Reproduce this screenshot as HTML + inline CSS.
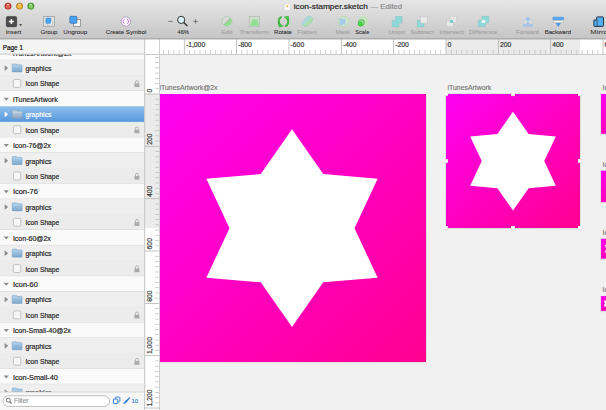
<!DOCTYPE html><html><head><meta charset="utf-8"><style>html,body{margin:0;padding:0;width:606px;height:410px;overflow:hidden;background:#f1f1f1}svg{display:block}text{font-family:"Liberation Sans",sans-serif}</style></head><body>
<svg width="606" height="410" viewBox="0 0 606 410">
<defs>
<linearGradient id="tb" x1="0" y1="0" x2="0" y2="1"><stop offset="0" stop-color="#e6e6e6"/><stop offset="1" stop-color="#c6c6c6"/></linearGradient>
<linearGradient id="mag" x1="0" y1="0" x2="1" y2="1"><stop offset="0" stop-color="#ff00f2"/><stop offset="1" stop-color="#ff0090"/></linearGradient>
<linearGradient id="sel" x1="0" y1="0" x2="0" y2="1"><stop offset="0" stop-color="#8ec0ec"/><stop offset="1" stop-color="#5898de"/></linearGradient>
<radialGradient id="red" cx="0.5" cy="0.35" r="0.6"><stop offset="0" stop-color="#ff9a8a"/><stop offset="1" stop-color="#d9342a"/></radialGradient>
<radialGradient id="yel" cx="0.5" cy="0.35" r="0.6"><stop offset="0" stop-color="#ffe08a"/><stop offset="1" stop-color="#e09a1a"/></radialGradient>
<radialGradient id="grn" cx="0.5" cy="0.35" r="0.6"><stop offset="0" stop-color="#b8f09a"/><stop offset="1" stop-color="#4aa838"/></radialGradient>
<linearGradient id="fold" x1="0" y1="0" x2="0" y2="1"><stop offset="0" stop-color="#b0d0ea"/><stop offset="1" stop-color="#7ca8cc"/></linearGradient>
<linearGradient id="foldsel" x1="0" y1="0" x2="0" y2="1"><stop offset="0" stop-color="#c9d6e2"/><stop offset="1" stop-color="#8aa6c0"/></linearGradient>
</defs>
<rect x="0" y="0" width="606" height="410" fill="#f1f1f1"/>
<rect x="157.80" y="94.30" width="268.70" height="268.50" fill="none" stroke="rgba(0,0,0,0.07)" stroke-width="1"/>
<rect x="158.00" y="94.00" width="268.00" height="268.00" fill="url(#mag)"/>
<polygon points="292.00,129.31 323.25,174.07 377.64,178.75 354.50,228.20 377.64,277.65 323.25,282.33 292.00,327.09 260.75,282.33 206.36,277.65 229.50,228.20 206.36,178.75 260.75,174.07" fill="#fff"/>
<text x="159.50" y="89.80" font-size="6.9" fill="#7a7a7a" stroke="#7a7a7a" stroke-width="0.18">iTunesArtwork@2x</text>
<rect x="445.80" y="94.30" width="134.70" height="134.50" fill="none" stroke="rgba(0,0,0,0.07)" stroke-width="1"/>
<rect x="446.00" y="94.00" width="134.00" height="134.00" fill="url(#mag)"/>
<polygon points="513.00,111.65 528.62,134.04 555.82,136.38 544.25,161.10 555.82,185.82 528.62,188.16 513.00,210.55 497.38,188.16 470.18,185.82 481.75,161.10 470.18,136.38 497.38,134.04" fill="#fff"/>
<text x="447.50" y="89.80" font-size="6.9" fill="#7a7a7a" stroke="#7a7a7a" stroke-width="0.18">iTunesArtwork</text>
<rect x="600.80" y="94.30" width="40.50" height="40.30" fill="none" stroke="rgba(0,0,0,0.07)" stroke-width="1"/>
<rect x="601.00" y="94.00" width="39.80" height="39.80" fill="url(#mag)"/>
<polygon points="620.90,99.24 625.54,105.89 633.62,106.59 630.18,113.93 633.62,121.27 625.54,121.97 620.90,128.62 616.26,121.97 608.18,121.27 611.62,113.93 608.18,106.59 616.26,105.89" fill="#fff"/>
<text x="602.50" y="89.80" font-size="6.9" fill="#7a7a7a" stroke="#7a7a7a" stroke-width="0.18">Icon-76@2x</text>
<rect x="600.80" y="171.00" width="32.10" height="31.90" fill="none" stroke="rgba(0,0,0,0.07)" stroke-width="1"/>
<rect x="601.00" y="170.70" width="31.40" height="31.40" fill="url(#mag)"/>
<polygon points="616.70,174.84 620.36,180.08 626.73,180.63 624.02,186.42 626.73,192.22 620.36,192.77 616.70,198.01 613.04,192.77 606.67,192.22 609.38,186.42 606.67,180.63 613.04,180.08" fill="#fff"/>
<text x="602.50" y="166.50" font-size="6.9" fill="#7a7a7a" stroke="#7a7a7a" stroke-width="0.18">Icon-60@2x</text>
<rect x="600.80" y="239.10" width="20.60" height="20.40" fill="none" stroke="rgba(0,0,0,0.07)" stroke-width="1"/>
<rect x="601.00" y="238.80" width="19.90" height="19.90" fill="url(#mag)"/>
<polygon points="610.95,241.42 613.27,244.75 617.31,245.09 615.59,248.76 617.31,252.44 613.27,252.78 610.95,256.11 608.63,252.78 604.59,252.44 606.31,248.76 604.59,245.09 608.63,244.75" fill="#fff"/>
<text x="602.50" y="234.60" font-size="6.9" fill="#7a7a7a" stroke="#7a7a7a" stroke-width="0.18">Icon-76</text>
<rect x="600.80" y="296.40" width="15.50" height="15.30" fill="none" stroke="rgba(0,0,0,0.07)" stroke-width="1"/>
<rect x="601.00" y="296.10" width="14.80" height="14.80" fill="url(#mag)"/>
<polygon points="608.40,298.05 610.13,300.52 613.13,300.78 611.85,303.51 613.13,306.24 610.13,306.50 608.40,308.97 606.67,306.50 603.67,306.24 604.95,303.51 603.67,300.78 606.67,300.52" fill="#fff"/>
<text x="602.50" y="291.90" font-size="6.9" fill="#7a7a7a" stroke="#7a7a7a" stroke-width="0.18">Icon-60</text>
<rect x="445.6" y="93.6" width="134.8" height="134.8" fill="none" stroke="#cfe6d8" stroke-width="0.7"/>
<rect x="444.10" y="92.30" width="3.8" height="3.8" fill="#c4c4c4"/><rect x="444.10" y="92.10" width="3.6" height="3.4" fill="#fbfbfb"/>
<rect x="444.10" y="159.30" width="3.8" height="3.8" fill="#c4c4c4"/><rect x="444.10" y="159.10" width="3.6" height="3.4" fill="#fbfbfb"/>
<rect x="444.10" y="226.30" width="3.8" height="3.8" fill="#c4c4c4"/><rect x="444.10" y="226.10" width="3.6" height="3.4" fill="#fbfbfb"/>
<rect x="511.10" y="92.30" width="3.8" height="3.8" fill="#c4c4c4"/><rect x="511.10" y="92.10" width="3.6" height="3.4" fill="#fbfbfb"/>
<rect x="511.10" y="226.30" width="3.8" height="3.8" fill="#c4c4c4"/><rect x="511.10" y="226.10" width="3.6" height="3.4" fill="#fbfbfb"/>
<rect x="578.10" y="92.30" width="3.8" height="3.8" fill="#c4c4c4"/><rect x="578.10" y="92.10" width="3.6" height="3.4" fill="#fbfbfb"/>
<rect x="578.10" y="159.30" width="3.8" height="3.8" fill="#c4c4c4"/><rect x="578.10" y="159.10" width="3.6" height="3.4" fill="#fbfbfb"/>
<rect x="578.10" y="226.30" width="3.8" height="3.8" fill="#c4c4c4"/><rect x="578.10" y="226.10" width="3.6" height="3.4" fill="#fbfbfb"/>
<rect x="145" y="39" width="461" height="15.5" fill="#ffffff"/>
<rect x="446" y="39" width="134" height="15.5" fill="#ebebeb"/>
<rect x="145" y="54" width="461" height="1" fill="#c8c8c8"/>
<rect x="145" y="39" width="14.5" height="371" fill="#ffffff"/>
<rect x="145" y="94" width="14.5" height="134" fill="#ebebeb"/>
<rect x="159" y="55" width="1" height="355" fill="#d0d0d0"/>
<rect x="145" y="39" width="15" height="15" fill="#ffffff"/>
<rect x="145" y="54" width="15" height="1" fill="#c8c8c8"/><rect x="159" y="39" width="1" height="16" fill="#d0d0d0"/>
<rect x="163.01" y="50" width="0.7" height="4" fill="#bdbdbd"/><rect x="168.25" y="50" width="0.7" height="4" fill="#bdbdbd"/><rect x="173.48" y="50" width="0.7" height="4" fill="#bdbdbd"/><rect x="178.72" y="50" width="0.7" height="4" fill="#bdbdbd"/><rect x="183.90" y="39" width="0.8" height="15.5" fill="#b4b4b4"/><text x="185.90" y="47" font-size="6.8" fill="#333" stroke="#333" stroke-width="0.18">-1,000</text><rect x="189.18" y="50" width="0.7" height="4" fill="#bdbdbd"/><rect x="194.42" y="50" width="0.7" height="4" fill="#bdbdbd"/><rect x="199.65" y="50" width="0.7" height="4" fill="#bdbdbd"/><rect x="204.89" y="50" width="0.7" height="4" fill="#bdbdbd"/><rect x="210.12" y="50" width="0.7" height="4" fill="#bdbdbd"/><rect x="215.35" y="50" width="0.7" height="4" fill="#bdbdbd"/><rect x="220.59" y="50" width="0.7" height="4" fill="#bdbdbd"/><rect x="225.82" y="50" width="0.7" height="4" fill="#bdbdbd"/><rect x="231.06" y="50" width="0.7" height="4" fill="#bdbdbd"/><rect x="236.24" y="39" width="0.8" height="15.5" fill="#b4b4b4"/><text x="238.24" y="47" font-size="6.8" fill="#333" stroke="#333" stroke-width="0.18">-800</text><rect x="241.52" y="50" width="0.7" height="4" fill="#bdbdbd"/><rect x="246.76" y="50" width="0.7" height="4" fill="#bdbdbd"/><rect x="251.99" y="50" width="0.7" height="4" fill="#bdbdbd"/><rect x="257.23" y="50" width="0.7" height="4" fill="#bdbdbd"/><rect x="262.46" y="50" width="0.7" height="4" fill="#bdbdbd"/><rect x="267.69" y="50" width="0.7" height="4" fill="#bdbdbd"/><rect x="272.93" y="50" width="0.7" height="4" fill="#bdbdbd"/><rect x="278.16" y="50" width="0.7" height="4" fill="#bdbdbd"/><rect x="283.40" y="50" width="0.7" height="4" fill="#bdbdbd"/><rect x="288.58" y="39" width="0.8" height="15.5" fill="#b4b4b4"/><text x="290.58" y="47" font-size="6.8" fill="#333" stroke="#333" stroke-width="0.18">-600</text><rect x="293.86" y="50" width="0.7" height="4" fill="#bdbdbd"/><rect x="299.10" y="50" width="0.7" height="4" fill="#bdbdbd"/><rect x="304.33" y="50" width="0.7" height="4" fill="#bdbdbd"/><rect x="309.57" y="50" width="0.7" height="4" fill="#bdbdbd"/><rect x="314.80" y="50" width="0.7" height="4" fill="#bdbdbd"/><rect x="320.03" y="50" width="0.7" height="4" fill="#bdbdbd"/><rect x="325.27" y="50" width="0.7" height="4" fill="#bdbdbd"/><rect x="330.50" y="50" width="0.7" height="4" fill="#bdbdbd"/><rect x="335.74" y="50" width="0.7" height="4" fill="#bdbdbd"/><rect x="340.92" y="39" width="0.8" height="15.5" fill="#b4b4b4"/><text x="342.92" y="47" font-size="6.8" fill="#333" stroke="#333" stroke-width="0.18">-400</text><rect x="346.20" y="50" width="0.7" height="4" fill="#bdbdbd"/><rect x="351.44" y="50" width="0.7" height="4" fill="#bdbdbd"/><rect x="356.67" y="50" width="0.7" height="4" fill="#bdbdbd"/><rect x="361.91" y="50" width="0.7" height="4" fill="#bdbdbd"/><rect x="367.14" y="50" width="0.7" height="4" fill="#bdbdbd"/><rect x="372.37" y="50" width="0.7" height="4" fill="#bdbdbd"/><rect x="377.61" y="50" width="0.7" height="4" fill="#bdbdbd"/><rect x="382.84" y="50" width="0.7" height="4" fill="#bdbdbd"/><rect x="388.08" y="50" width="0.7" height="4" fill="#bdbdbd"/><rect x="393.26" y="39" width="0.8" height="15.5" fill="#b4b4b4"/><text x="395.26" y="47" font-size="6.8" fill="#333" stroke="#333" stroke-width="0.18">-200</text><rect x="398.54" y="50" width="0.7" height="4" fill="#bdbdbd"/><rect x="403.78" y="50" width="0.7" height="4" fill="#bdbdbd"/><rect x="409.01" y="50" width="0.7" height="4" fill="#bdbdbd"/><rect x="414.25" y="50" width="0.7" height="4" fill="#bdbdbd"/><rect x="419.48" y="50" width="0.7" height="4" fill="#bdbdbd"/><rect x="424.71" y="50" width="0.7" height="4" fill="#bdbdbd"/><rect x="429.95" y="50" width="0.7" height="4" fill="#bdbdbd"/><rect x="435.18" y="50" width="0.7" height="4" fill="#bdbdbd"/><rect x="440.42" y="50" width="0.7" height="4" fill="#bdbdbd"/><rect x="445.60" y="39" width="0.8" height="15.5" fill="#b4b4b4"/><text x="447.60" y="47" font-size="6.8" fill="#333" stroke="#333" stroke-width="0.18">0</text><rect x="450.88" y="50" width="0.7" height="4" fill="#bdbdbd"/><rect x="456.12" y="50" width="0.7" height="4" fill="#bdbdbd"/><rect x="461.35" y="50" width="0.7" height="4" fill="#bdbdbd"/><rect x="466.59" y="50" width="0.7" height="4" fill="#bdbdbd"/><rect x="471.82" y="50" width="0.7" height="4" fill="#bdbdbd"/><rect x="477.05" y="50" width="0.7" height="4" fill="#bdbdbd"/><rect x="482.29" y="50" width="0.7" height="4" fill="#bdbdbd"/><rect x="487.52" y="50" width="0.7" height="4" fill="#bdbdbd"/><rect x="492.76" y="50" width="0.7" height="4" fill="#bdbdbd"/><rect x="497.94" y="39" width="0.8" height="15.5" fill="#b4b4b4"/><text x="499.94" y="47" font-size="6.8" fill="#333" stroke="#333" stroke-width="0.18">200</text><rect x="503.22" y="50" width="0.7" height="4" fill="#bdbdbd"/><rect x="508.46" y="50" width="0.7" height="4" fill="#bdbdbd"/><rect x="513.69" y="50" width="0.7" height="4" fill="#bdbdbd"/><rect x="518.93" y="50" width="0.7" height="4" fill="#bdbdbd"/><rect x="524.16" y="50" width="0.7" height="4" fill="#bdbdbd"/><rect x="529.39" y="50" width="0.7" height="4" fill="#bdbdbd"/><rect x="534.63" y="50" width="0.7" height="4" fill="#bdbdbd"/><rect x="539.86" y="50" width="0.7" height="4" fill="#bdbdbd"/><rect x="545.10" y="50" width="0.7" height="4" fill="#bdbdbd"/><rect x="550.28" y="39" width="0.8" height="15.5" fill="#b4b4b4"/><text x="552.28" y="47" font-size="6.8" fill="#333" stroke="#333" stroke-width="0.18">400</text><rect x="555.56" y="50" width="0.7" height="4" fill="#bdbdbd"/><rect x="560.80" y="50" width="0.7" height="4" fill="#bdbdbd"/><rect x="566.03" y="50" width="0.7" height="4" fill="#bdbdbd"/><rect x="571.27" y="50" width="0.7" height="4" fill="#bdbdbd"/><rect x="576.50" y="50" width="0.7" height="4" fill="#bdbdbd"/><rect x="581.73" y="50" width="0.7" height="4" fill="#bdbdbd"/><rect x="586.97" y="50" width="0.7" height="4" fill="#bdbdbd"/><rect x="592.20" y="50" width="0.7" height="4" fill="#bdbdbd"/><rect x="597.44" y="50" width="0.7" height="4" fill="#bdbdbd"/><rect x="602.62" y="39" width="0.8" height="15.5" fill="#b4b4b4"/><text x="604.62" y="47" font-size="6.8" fill="#333" stroke="#333" stroke-width="0.18">600</text><rect x="155" y="57.01" width="4" height="0.7" fill="#bdbdbd"/><rect x="155" y="62.25" width="4" height="0.7" fill="#bdbdbd"/><rect x="155" y="67.48" width="4" height="0.7" fill="#bdbdbd"/><rect x="155" y="72.71" width="4" height="0.7" fill="#bdbdbd"/><rect x="155" y="77.95" width="4" height="0.7" fill="#bdbdbd"/><rect x="155" y="83.18" width="4" height="0.7" fill="#bdbdbd"/><rect x="155" y="88.42" width="4" height="0.7" fill="#bdbdbd"/><rect x="145" y="93.60" width="14.5" height="0.8" fill="#b4b4b4"/><text transform="translate(152.3 92.40) rotate(-90)" font-size="6.8" fill="#333" stroke="#333" stroke-width="0.18">0</text><rect x="155" y="98.88" width="4" height="0.7" fill="#bdbdbd"/><rect x="155" y="104.12" width="4" height="0.7" fill="#bdbdbd"/><rect x="155" y="109.35" width="4" height="0.7" fill="#bdbdbd"/><rect x="155" y="114.59" width="4" height="0.7" fill="#bdbdbd"/><rect x="155" y="119.82" width="4" height="0.7" fill="#bdbdbd"/><rect x="155" y="125.05" width="4" height="0.7" fill="#bdbdbd"/><rect x="155" y="130.29" width="4" height="0.7" fill="#bdbdbd"/><rect x="155" y="135.52" width="4" height="0.7" fill="#bdbdbd"/><rect x="155" y="140.76" width="4" height="0.7" fill="#bdbdbd"/><rect x="145" y="145.94" width="14.5" height="0.8" fill="#b4b4b4"/><text transform="translate(152.3 144.74) rotate(-90)" font-size="6.8" fill="#333" stroke="#333" stroke-width="0.18">200</text><rect x="155" y="151.22" width="4" height="0.7" fill="#bdbdbd"/><rect x="155" y="156.46" width="4" height="0.7" fill="#bdbdbd"/><rect x="155" y="161.69" width="4" height="0.7" fill="#bdbdbd"/><rect x="155" y="166.93" width="4" height="0.7" fill="#bdbdbd"/><rect x="155" y="172.16" width="4" height="0.7" fill="#bdbdbd"/><rect x="155" y="177.39" width="4" height="0.7" fill="#bdbdbd"/><rect x="155" y="182.63" width="4" height="0.7" fill="#bdbdbd"/><rect x="155" y="187.86" width="4" height="0.7" fill="#bdbdbd"/><rect x="155" y="193.10" width="4" height="0.7" fill="#bdbdbd"/><rect x="145" y="198.28" width="14.5" height="0.8" fill="#b4b4b4"/><text transform="translate(152.3 197.08) rotate(-90)" font-size="6.8" fill="#333" stroke="#333" stroke-width="0.18">400</text><rect x="155" y="203.56" width="4" height="0.7" fill="#bdbdbd"/><rect x="155" y="208.80" width="4" height="0.7" fill="#bdbdbd"/><rect x="155" y="214.03" width="4" height="0.7" fill="#bdbdbd"/><rect x="155" y="219.27" width="4" height="0.7" fill="#bdbdbd"/><rect x="155" y="224.50" width="4" height="0.7" fill="#bdbdbd"/><rect x="155" y="229.73" width="4" height="0.7" fill="#bdbdbd"/><rect x="155" y="234.97" width="4" height="0.7" fill="#bdbdbd"/><rect x="155" y="240.20" width="4" height="0.7" fill="#bdbdbd"/><rect x="155" y="245.44" width="4" height="0.7" fill="#bdbdbd"/><rect x="145" y="250.62" width="14.5" height="0.8" fill="#b4b4b4"/><text transform="translate(152.3 249.42) rotate(-90)" font-size="6.8" fill="#333" stroke="#333" stroke-width="0.18">600</text><rect x="155" y="255.90" width="4" height="0.7" fill="#bdbdbd"/><rect x="155" y="261.14" width="4" height="0.7" fill="#bdbdbd"/><rect x="155" y="266.37" width="4" height="0.7" fill="#bdbdbd"/><rect x="155" y="271.61" width="4" height="0.7" fill="#bdbdbd"/><rect x="155" y="276.84" width="4" height="0.7" fill="#bdbdbd"/><rect x="155" y="282.07" width="4" height="0.7" fill="#bdbdbd"/><rect x="155" y="287.31" width="4" height="0.7" fill="#bdbdbd"/><rect x="155" y="292.54" width="4" height="0.7" fill="#bdbdbd"/><rect x="155" y="297.78" width="4" height="0.7" fill="#bdbdbd"/><rect x="145" y="302.96" width="14.5" height="0.8" fill="#b4b4b4"/><text transform="translate(152.3 301.76) rotate(-90)" font-size="6.8" fill="#333" stroke="#333" stroke-width="0.18">800</text><rect x="155" y="308.24" width="4" height="0.7" fill="#bdbdbd"/><rect x="155" y="313.48" width="4" height="0.7" fill="#bdbdbd"/><rect x="155" y="318.71" width="4" height="0.7" fill="#bdbdbd"/><rect x="155" y="323.95" width="4" height="0.7" fill="#bdbdbd"/><rect x="155" y="329.18" width="4" height="0.7" fill="#bdbdbd"/><rect x="155" y="334.41" width="4" height="0.7" fill="#bdbdbd"/><rect x="155" y="339.65" width="4" height="0.7" fill="#bdbdbd"/><rect x="155" y="344.88" width="4" height="0.7" fill="#bdbdbd"/><rect x="155" y="350.12" width="4" height="0.7" fill="#bdbdbd"/><rect x="145" y="355.30" width="14.5" height="0.8" fill="#b4b4b4"/><text transform="translate(152.3 354.10) rotate(-90)" font-size="6.8" fill="#333" stroke="#333" stroke-width="0.18">1,000</text><rect x="155" y="360.58" width="4" height="0.7" fill="#bdbdbd"/><rect x="155" y="365.82" width="4" height="0.7" fill="#bdbdbd"/><rect x="155" y="371.05" width="4" height="0.7" fill="#bdbdbd"/><rect x="155" y="376.29" width="4" height="0.7" fill="#bdbdbd"/><rect x="155" y="381.52" width="4" height="0.7" fill="#bdbdbd"/><rect x="155" y="386.75" width="4" height="0.7" fill="#bdbdbd"/><rect x="155" y="391.99" width="4" height="0.7" fill="#bdbdbd"/><rect x="155" y="397.22" width="4" height="0.7" fill="#bdbdbd"/><rect x="155" y="402.46" width="4" height="0.7" fill="#bdbdbd"/><rect x="145" y="407.64" width="14.5" height="0.8" fill="#b4b4b4"/><text transform="translate(152.3 406.44) rotate(-90)" font-size="6.8" fill="#333" stroke="#333" stroke-width="0.18">1,200</text>
<rect x="0" y="39" width="144" height="371" fill="#ebebeb"/>
<rect x="143.6" y="39" width="1.6" height="371" fill="#cccccc"/>
<rect x="0" y="44.77" width="144" height="15.43" fill="#fafafa"/>
<rect x="0" y="59.75" width="144" height="0.9" fill="#d4d4d4"/>
<polygon points="3.6,51.37 8.9,51.37 6.25,54.37" fill="#8c8c8c"/>
<text x="12.9" y="55.52" font-size="7.2" textLength="58.50" lengthAdjust="spacingAndGlyphs" fill="#1c1c1c" stroke="#1c1c1c" stroke-width="0.18">iTunesArtwork@2x</text>
<rect x="0" y="60.20" width="144" height="15.43" fill="#efefef"/>
<rect x="0" y="75.33" width="144" height="0.6" fill="#e6e6e6"/>
<polygon points="4.7,65.20 4.7,70.90 8.1,68.05" fill="#8a8a8a"/>
<path d="M13 63.95 h3.3 a0.6 0.6 0 0 1 0.5 0.3 l0.4 0.6 h4.3 a0.6 0.6 0 0 1 0.6 0.6 v6 a0.6 0.6 0 0 1 -0.6 0.6 h-8.7 a0.6 0.6 0 0 1 -0.6 -0.6 v-6.9 a0.6 0.6 0 0 1 0.6 -0.6z" fill="url(#fold)" stroke="#6f98bf" stroke-width="0.45"/>
<path d="M12.6 66.10 h9.4" stroke="#c2dcf0" stroke-width="0.4"/>
<text x="25.4" y="70.95" font-size="7.2" textLength="26.2" lengthAdjust="spacingAndGlyphs" fill="#1c1c1c" stroke="#1c1c1c" stroke-width="0.18">graphics</text>
<rect x="0" y="75.63" width="144" height="15.43" fill="#ececec"/>
<rect x="0" y="90.61" width="144" height="0.9" fill="#d4d4d4"/>
<rect x="13.4" y="79.48" width="7.4" height="7.9" rx="1.3" fill="#f6f6f6" stroke="#a8a8a8" stroke-width="0.65"/>
<text x="25.4" y="86.38" font-size="7.2" textLength="33.9" lengthAdjust="spacingAndGlyphs" fill="#1c1c1c" stroke="#1c1c1c" stroke-width="0.18">Icon Shape</text>
<path d="M134.4 83.43 h5 v3.6 h-5z" fill="#aaaaaa"/>
<path d="M135.5 83.63 v-1.6 a1.4 1.4 0 0 1 2.8 0 v1.6" fill="none" stroke="#aaaaaa" stroke-width="0.9"/>
<rect x="0" y="91.06" width="144" height="15.43" fill="#fafafa"/>
<rect x="0" y="106.04" width="144" height="0.9" fill="#d4d4d4"/>
<polygon points="3.6,97.66 8.9,97.66 6.25,100.66" fill="#8c8c8c"/>
<text x="12.9" y="101.81" font-size="7.2" textLength="44.80" lengthAdjust="spacingAndGlyphs" fill="#1c1c1c" stroke="#1c1c1c" stroke-width="0.18">iTunesArtwork</text>
<rect x="0" y="106.49" width="144" height="15.43" fill="url(#sel)"/>
<polygon points="4.7,111.49 4.7,117.19 8.1,114.34" fill="#ffffff"/>
<path d="M13 110.24 h3.3 a0.6 0.6 0 0 1 0.5 0.3 l0.4 0.6 h4.3 a0.6 0.6 0 0 1 0.6 0.6 v6 a0.6 0.6 0 0 1 -0.6 0.6 h-8.7 a0.6 0.6 0 0 1 -0.6 -0.6 v-6.9 a0.6 0.6 0 0 1 0.6 -0.6z" fill="url(#foldsel)" stroke="#8aa2b8" stroke-width="0.45"/>
<path d="M12.6 112.39 h9.4" stroke="#d8e2ea" stroke-width="0.4"/>
<text x="25.4" y="117.24" font-size="7.2" textLength="26.2" lengthAdjust="spacingAndGlyphs" fill="#ffffff" stroke="#ffffff" stroke-width="0.18">graphics</text>
<rect x="0" y="121.92" width="144" height="15.43" fill="#ececec"/>
<rect x="0" y="136.90" width="144" height="0.9" fill="#d4d4d4"/>
<rect x="13.4" y="125.77" width="7.4" height="7.9" rx="1.3" fill="#f6f6f6" stroke="#a8a8a8" stroke-width="0.65"/>
<text x="25.4" y="132.67" font-size="7.2" textLength="33.9" lengthAdjust="spacingAndGlyphs" fill="#1c1c1c" stroke="#1c1c1c" stroke-width="0.18">Icon Shape</text>
<path d="M134.4 129.72 h5 v3.6 h-5z" fill="#aaaaaa"/>
<path d="M135.5 129.92 v-1.6 a1.4 1.4 0 0 1 2.8 0 v1.6" fill="none" stroke="#aaaaaa" stroke-width="0.9"/>
<rect x="0" y="137.35" width="144" height="15.43" fill="#fafafa"/>
<rect x="0" y="152.33" width="144" height="0.9" fill="#d4d4d4"/>
<polygon points="3.6,143.95 8.9,143.95 6.25,146.95" fill="#8c8c8c"/>
<text x="12.9" y="148.10" font-size="7.2" textLength="38.00" lengthAdjust="spacingAndGlyphs" fill="#1c1c1c" stroke="#1c1c1c" stroke-width="0.18">Icon-76@2x</text>
<rect x="0" y="152.78" width="144" height="15.43" fill="#efefef"/>
<rect x="0" y="167.91" width="144" height="0.6" fill="#e6e6e6"/>
<polygon points="4.7,157.78 4.7,163.48 8.1,160.63" fill="#8a8a8a"/>
<path d="M13 156.53 h3.3 a0.6 0.6 0 0 1 0.5 0.3 l0.4 0.6 h4.3 a0.6 0.6 0 0 1 0.6 0.6 v6 a0.6 0.6 0 0 1 -0.6 0.6 h-8.7 a0.6 0.6 0 0 1 -0.6 -0.6 v-6.9 a0.6 0.6 0 0 1 0.6 -0.6z" fill="url(#fold)" stroke="#6f98bf" stroke-width="0.45"/>
<path d="M12.6 158.68 h9.4" stroke="#c2dcf0" stroke-width="0.4"/>
<text x="25.4" y="163.53" font-size="7.2" textLength="26.2" lengthAdjust="spacingAndGlyphs" fill="#1c1c1c" stroke="#1c1c1c" stroke-width="0.18">graphics</text>
<rect x="0" y="168.21" width="144" height="15.43" fill="#ececec"/>
<rect x="0" y="183.19" width="144" height="0.9" fill="#d4d4d4"/>
<rect x="13.4" y="172.06" width="7.4" height="7.9" rx="1.3" fill="#f6f6f6" stroke="#a8a8a8" stroke-width="0.65"/>
<text x="25.4" y="178.96" font-size="7.2" textLength="33.9" lengthAdjust="spacingAndGlyphs" fill="#1c1c1c" stroke="#1c1c1c" stroke-width="0.18">Icon Shape</text>
<path d="M134.4 176.01 h5 v3.6 h-5z" fill="#aaaaaa"/>
<path d="M135.5 176.21 v-1.6 a1.4 1.4 0 0 1 2.8 0 v1.6" fill="none" stroke="#aaaaaa" stroke-width="0.9"/>
<rect x="0" y="183.64" width="144" height="15.43" fill="#fafafa"/>
<rect x="0" y="198.62" width="144" height="0.9" fill="#d4d4d4"/>
<polygon points="3.6,190.24 8.9,190.24 6.25,193.24" fill="#8c8c8c"/>
<text x="12.9" y="194.39" font-size="7.2" textLength="24.90" lengthAdjust="spacingAndGlyphs" fill="#1c1c1c" stroke="#1c1c1c" stroke-width="0.18">Icon-76</text>
<rect x="0" y="199.07" width="144" height="15.43" fill="#efefef"/>
<rect x="0" y="214.20" width="144" height="0.6" fill="#e6e6e6"/>
<polygon points="4.7,204.07 4.7,209.77 8.1,206.92" fill="#8a8a8a"/>
<path d="M13 202.82 h3.3 a0.6 0.6 0 0 1 0.5 0.3 l0.4 0.6 h4.3 a0.6 0.6 0 0 1 0.6 0.6 v6 a0.6 0.6 0 0 1 -0.6 0.6 h-8.7 a0.6 0.6 0 0 1 -0.6 -0.6 v-6.9 a0.6 0.6 0 0 1 0.6 -0.6z" fill="url(#fold)" stroke="#6f98bf" stroke-width="0.45"/>
<path d="M12.6 204.97 h9.4" stroke="#c2dcf0" stroke-width="0.4"/>
<text x="25.4" y="209.82" font-size="7.2" textLength="26.2" lengthAdjust="spacingAndGlyphs" fill="#1c1c1c" stroke="#1c1c1c" stroke-width="0.18">graphics</text>
<rect x="0" y="214.50" width="144" height="15.43" fill="#ececec"/>
<rect x="0" y="229.48" width="144" height="0.9" fill="#d4d4d4"/>
<rect x="13.4" y="218.35" width="7.4" height="7.9" rx="1.3" fill="#f6f6f6" stroke="#a8a8a8" stroke-width="0.65"/>
<text x="25.4" y="225.25" font-size="7.2" textLength="33.9" lengthAdjust="spacingAndGlyphs" fill="#1c1c1c" stroke="#1c1c1c" stroke-width="0.18">Icon Shape</text>
<path d="M134.4 222.30 h5 v3.6 h-5z" fill="#aaaaaa"/>
<path d="M135.5 222.50 v-1.6 a1.4 1.4 0 0 1 2.8 0 v1.6" fill="none" stroke="#aaaaaa" stroke-width="0.9"/>
<rect x="0" y="229.93" width="144" height="15.43" fill="#fafafa"/>
<rect x="0" y="244.91" width="144" height="0.9" fill="#d4d4d4"/>
<polygon points="3.6,236.53 8.9,236.53 6.25,239.53" fill="#8c8c8c"/>
<text x="12.9" y="240.68" font-size="7.2" textLength="38.00" lengthAdjust="spacingAndGlyphs" fill="#1c1c1c" stroke="#1c1c1c" stroke-width="0.18">Icon-60@2x</text>
<rect x="0" y="245.36" width="144" height="15.43" fill="#efefef"/>
<rect x="0" y="260.49" width="144" height="0.6" fill="#e6e6e6"/>
<polygon points="4.7,250.36 4.7,256.06 8.1,253.21" fill="#8a8a8a"/>
<path d="M13 249.11 h3.3 a0.6 0.6 0 0 1 0.5 0.3 l0.4 0.6 h4.3 a0.6 0.6 0 0 1 0.6 0.6 v6 a0.6 0.6 0 0 1 -0.6 0.6 h-8.7 a0.6 0.6 0 0 1 -0.6 -0.6 v-6.9 a0.6 0.6 0 0 1 0.6 -0.6z" fill="url(#fold)" stroke="#6f98bf" stroke-width="0.45"/>
<path d="M12.6 251.26 h9.4" stroke="#c2dcf0" stroke-width="0.4"/>
<text x="25.4" y="256.11" font-size="7.2" textLength="26.2" lengthAdjust="spacingAndGlyphs" fill="#1c1c1c" stroke="#1c1c1c" stroke-width="0.18">graphics</text>
<rect x="0" y="260.79" width="144" height="15.43" fill="#ececec"/>
<rect x="0" y="275.77" width="144" height="0.9" fill="#d4d4d4"/>
<rect x="13.4" y="264.64" width="7.4" height="7.9" rx="1.3" fill="#f6f6f6" stroke="#a8a8a8" stroke-width="0.65"/>
<text x="25.4" y="271.54" font-size="7.2" textLength="33.9" lengthAdjust="spacingAndGlyphs" fill="#1c1c1c" stroke="#1c1c1c" stroke-width="0.18">Icon Shape</text>
<path d="M134.4 268.59 h5 v3.6 h-5z" fill="#aaaaaa"/>
<path d="M135.5 268.79 v-1.6 a1.4 1.4 0 0 1 2.8 0 v1.6" fill="none" stroke="#aaaaaa" stroke-width="0.9"/>
<rect x="0" y="276.22" width="144" height="15.43" fill="#fafafa"/>
<rect x="0" y="291.20" width="144" height="0.9" fill="#d4d4d4"/>
<polygon points="3.6,282.82 8.9,282.82 6.25,285.82" fill="#8c8c8c"/>
<text x="12.9" y="286.97" font-size="7.2" textLength="25.00" lengthAdjust="spacingAndGlyphs" fill="#1c1c1c" stroke="#1c1c1c" stroke-width="0.18">Icon-60</text>
<rect x="0" y="291.65" width="144" height="15.43" fill="#efefef"/>
<rect x="0" y="306.78" width="144" height="0.6" fill="#e6e6e6"/>
<polygon points="4.7,296.65 4.7,302.35 8.1,299.50" fill="#8a8a8a"/>
<path d="M13 295.40 h3.3 a0.6 0.6 0 0 1 0.5 0.3 l0.4 0.6 h4.3 a0.6 0.6 0 0 1 0.6 0.6 v6 a0.6 0.6 0 0 1 -0.6 0.6 h-8.7 a0.6 0.6 0 0 1 -0.6 -0.6 v-6.9 a0.6 0.6 0 0 1 0.6 -0.6z" fill="url(#fold)" stroke="#6f98bf" stroke-width="0.45"/>
<path d="M12.6 297.55 h9.4" stroke="#c2dcf0" stroke-width="0.4"/>
<text x="25.4" y="302.40" font-size="7.2" textLength="26.2" lengthAdjust="spacingAndGlyphs" fill="#1c1c1c" stroke="#1c1c1c" stroke-width="0.18">graphics</text>
<rect x="0" y="307.08" width="144" height="15.43" fill="#ececec"/>
<rect x="0" y="322.06" width="144" height="0.9" fill="#d4d4d4"/>
<rect x="13.4" y="310.93" width="7.4" height="7.9" rx="1.3" fill="#f6f6f6" stroke="#a8a8a8" stroke-width="0.65"/>
<text x="25.4" y="317.83" font-size="7.2" textLength="33.9" lengthAdjust="spacingAndGlyphs" fill="#1c1c1c" stroke="#1c1c1c" stroke-width="0.18">Icon Shape</text>
<path d="M134.4 314.88 h5 v3.6 h-5z" fill="#aaaaaa"/>
<path d="M135.5 315.08 v-1.6 a1.4 1.4 0 0 1 2.8 0 v1.6" fill="none" stroke="#aaaaaa" stroke-width="0.9"/>
<rect x="0" y="322.51" width="144" height="15.43" fill="#fafafa"/>
<rect x="0" y="337.49" width="144" height="0.9" fill="#d4d4d4"/>
<polygon points="3.6,329.11 8.9,329.11 6.25,332.11" fill="#8c8c8c"/>
<text x="12.9" y="333.26" font-size="7.2" textLength="58.00" lengthAdjust="spacingAndGlyphs" fill="#1c1c1c" stroke="#1c1c1c" stroke-width="0.18">Icon-Small-40@2x</text>
<rect x="0" y="337.94" width="144" height="15.43" fill="#efefef"/>
<rect x="0" y="353.07" width="144" height="0.6" fill="#e6e6e6"/>
<polygon points="4.7,342.94 4.7,348.64 8.1,345.79" fill="#8a8a8a"/>
<path d="M13 341.69 h3.3 a0.6 0.6 0 0 1 0.5 0.3 l0.4 0.6 h4.3 a0.6 0.6 0 0 1 0.6 0.6 v6 a0.6 0.6 0 0 1 -0.6 0.6 h-8.7 a0.6 0.6 0 0 1 -0.6 -0.6 v-6.9 a0.6 0.6 0 0 1 0.6 -0.6z" fill="url(#fold)" stroke="#6f98bf" stroke-width="0.45"/>
<path d="M12.6 343.84 h9.4" stroke="#c2dcf0" stroke-width="0.4"/>
<text x="25.4" y="348.69" font-size="7.2" textLength="26.2" lengthAdjust="spacingAndGlyphs" fill="#1c1c1c" stroke="#1c1c1c" stroke-width="0.18">graphics</text>
<rect x="0" y="353.37" width="144" height="15.43" fill="#ececec"/>
<rect x="0" y="368.35" width="144" height="0.9" fill="#d4d4d4"/>
<rect x="13.4" y="357.22" width="7.4" height="7.9" rx="1.3" fill="#f6f6f6" stroke="#a8a8a8" stroke-width="0.65"/>
<text x="25.4" y="364.12" font-size="7.2" textLength="33.9" lengthAdjust="spacingAndGlyphs" fill="#1c1c1c" stroke="#1c1c1c" stroke-width="0.18">Icon Shape</text>
<path d="M134.4 361.17 h5 v3.6 h-5z" fill="#aaaaaa"/>
<path d="M135.5 361.37 v-1.6 a1.4 1.4 0 0 1 2.8 0 v1.6" fill="none" stroke="#aaaaaa" stroke-width="0.9"/>
<rect x="0" y="368.80" width="144" height="15.43" fill="#fafafa"/>
<rect x="0" y="383.78" width="144" height="0.9" fill="#d4d4d4"/>
<polygon points="3.6,375.40 8.9,375.40 6.25,378.40" fill="#8c8c8c"/>
<text x="12.9" y="379.55" font-size="7.2" textLength="44.90" lengthAdjust="spacingAndGlyphs" fill="#1c1c1c" stroke="#1c1c1c" stroke-width="0.18">Icon-Small-40</text>
<rect x="0" y="384.23" width="144" height="15.43" fill="#efefef"/>
<rect x="0" y="399.21" width="144" height="0.9" fill="#d4d4d4"/>
<polygon points="4.7,389.23 4.7,394.93 8.1,392.08" fill="#8a8a8a"/>
<path d="M13 387.98 h3.3 a0.6 0.6 0 0 1 0.5 0.3 l0.4 0.6 h4.3 a0.6 0.6 0 0 1 0.6 0.6 v6 a0.6 0.6 0 0 1 -0.6 0.6 h-8.7 a0.6 0.6 0 0 1 -0.6 -0.6 v-6.9 a0.6 0.6 0 0 1 0.6 -0.6z" fill="url(#fold)" stroke="#6f98bf" stroke-width="0.45"/>
<path d="M12.6 390.13 h9.4" stroke="#c2dcf0" stroke-width="0.4"/>
<text x="25.4" y="394.98" font-size="7.2" textLength="26.2" lengthAdjust="spacingAndGlyphs" fill="#1c1c1c" stroke="#1c1c1c" stroke-width="0.18">graphics</text>
<rect x="0" y="39" width="144" height="15" fill="#f4f4f4"/>
<rect x="0" y="53.6" width="144" height="1" fill="#c8c8c8"/>
<text x="2.7" y="49.8" font-size="6.9" textLength="20.3" lengthAdjust="spacingAndGlyphs" fill="#222" stroke="#222" stroke-width="0.24">Page 1</text>
<rect x="0" y="392" width="144" height="18" fill="#f6f6f6"/>
<rect x="0" y="391.6" width="144" height="0.8" fill="#d0d0d0"/>
<rect x="3" y="395.8" width="106.5" height="10.6" rx="5.3" fill="#ffffff" stroke="#a6a6a6" stroke-width="0.7"/>
<circle cx="8.3" cy="400.2" r="2" fill="none" stroke="#666" stroke-width="0.9"/><path d="M9.7 401.7 l1.8 1.8" stroke="#666" stroke-width="1.1"/>
<text x="13.9" y="403.4" font-size="6.6" fill="#9a9a9a" stroke="#9a9a9a" stroke-width="0.18">Filter</text>
<rect x="113.4" y="399.1" width="4.4" height="4.5" rx="0.6" fill="none" stroke="#2f7fd8" stroke-width="1"/><path d="M115.3 398.6 v-1.1 a0.4 0.4 0 0 1 0.4 -0.4 h3.8 a0.4 0.4 0 0 1 0.4 0.4 v3.8 a0.4 0.4 0 0 1 -0.4 0.4 h-1.2" fill="none" stroke="#2f7fd8" stroke-width="0.9"/>
<path d="M129.7 397.0 L130.3 397.7 L126.6 402.6 Q125 403.9 123 404.3 Q123.9 402.4 125.2 401 Z" fill="#2f7fd8"/>
<text x="131.4" y="403.2" font-size="6" fill="#3a86e0" stroke="#3a86e0" stroke-width="0.18">10</text>
<rect x="0" y="0" width="606" height="38" fill="url(#tb)"/>
<rect x="0" y="38" width="606" height="1.5" fill="#adadad"/>
<circle cx="8.00" cy="6.1" r="3.2" fill="#c8281e" stroke="#8e2a22" stroke-width="0.55"/>
<circle cx="8.00" cy="6.5" r="2.3" fill="#f06a5a" opacity="0.85"/>
<ellipse cx="8.00" cy="4.6" rx="1.5" ry="0.8" fill="#ffffff" opacity="0.55"/>
<circle cx="19.55" cy="6.1" r="3.2" fill="#d8901a" stroke="#9a6a1a" stroke-width="0.55"/>
<circle cx="19.55" cy="6.5" r="2.3" fill="#f5c048" opacity="0.85"/>
<ellipse cx="19.55" cy="4.6" rx="1.5" ry="0.8" fill="#ffffff" opacity="0.55"/>
<circle cx="30.85" cy="6.1" r="3.2" fill="#3f9a2a" stroke="#3a7a2a" stroke-width="0.55"/>
<circle cx="30.85" cy="6.5" r="2.3" fill="#8ad86a" opacity="0.85"/>
<ellipse cx="30.85" cy="4.6" rx="1.5" ry="0.8" fill="#ffffff" opacity="0.55"/>
<path d="M284.3 3.8 h4.2 l1.6 1.6 v4.8 h-5.8z" fill="#fbfbfb" stroke="#c8c8c8" stroke-width="0.3"/><path d="M285.6 5.6 h3.2 l-1.6 2z" fill="#f5a623"/>
<text x="293.7" y="8.8" font-size="7.3" textLength="74.2" lengthAdjust="spacingAndGlyphs" fill="#262626" stroke="#262626" stroke-width="0.18">icon-stamper.sketch</text><text x="370.7" y="8.8" font-size="7.3" textLength="7.2" lengthAdjust="spacingAndGlyphs" fill="#9a9a9a" stroke="#9a9a9a" stroke-width="0.18">—</text><text x="380.3" y="8.8" font-size="7.3" textLength="21.8" lengthAdjust="spacingAndGlyphs" fill="#8a8a8a" stroke="#8a8a8a" stroke-width="0.18">Edited</text>
<rect x="6.1" y="16.3" width="10.8" height="10.6" rx="1.6" fill="#4b4b4b" stroke="#3a3a3a" stroke-width="0.3"/><path d="M11.4 19.1 v5 M8.9 21.6 h5" stroke="#fff" stroke-width="1.5"/>
<path d="M19.1 24.3 h3 l-1.5 1.7z" fill="#2a2a2a"/>
<text x="5.65" y="33.8" font-size="6.2" textLength="15.60" lengthAdjust="spacingAndGlyphs" fill="#2c2c2c" stroke="#2c2c2c" stroke-width="0.08">Insert</text>
<rect x="43.7" y="16.6" width="10.8" height="9.7" fill="#e2e2e2" stroke="#9c9c9c" stroke-width="0.75"/>
<rect x="47.4" y="20.9" width="5" height="4" fill="#fff" stroke="#9a9a9a" stroke-width="0.4"/>
<rect x="45.8" y="18" width="5.1" height="5.4" rx="0.8" fill="#4aa3f5" stroke="#2e7fd0" stroke-width="0.4"/>
<text x="40.55" y="33.8" font-size="6.2" textLength="16.90" lengthAdjust="spacingAndGlyphs" fill="#2c2c2c" stroke="#2c2c2c" stroke-width="0.08">Group</text>
<rect x="73.6" y="19.5" width="6.7" height="6.8" fill="#fafafa" stroke="#7a7a7a" stroke-width="0.7"/>
<rect x="69.9" y="16.3" width="7" height="7" rx="1" fill="#4aa3f5" stroke="#2a64b0" stroke-width="0.7"/>
<text x="63.35" y="33.8" font-size="6.2" textLength="23.90" lengthAdjust="spacingAndGlyphs" fill="#2c2c2c" stroke="#2c2c2c" stroke-width="0.08">Ungroup</text>
<circle cx="125.8" cy="21.5" r="4.7" fill="#fbf8fc" stroke="#a88ab8" stroke-width="0.8"/>
<path d="M124.7 19.1 a2.6 2.6 0 0 0 -0.1 4.8 M126.9 19.1 a2.6 2.6 0 0 1 0.1 4.8" fill="none" stroke="#cf78ea" stroke-width="1.0"/>
<text x="105.75" y="33.8" font-size="6.2" textLength="40.50" lengthAdjust="spacingAndGlyphs" fill="#2c2c2c" stroke="#2c2c2c" stroke-width="0.08">Create Symbol</text>
<path d="M168.2 21.4 h4.6 M193.3 21.4 h4.6 M195.6 19.1 v4.6" stroke="#6a6a6a" stroke-width="0.8"/>
<circle cx="181.2" cy="19.9" r="3.6" fill="#d8f2fa" stroke="#333" stroke-width="1"/><path d="M183.8 22.5 l3.6 3.6" stroke="#333" stroke-width="1.4"/>
<text x="177.45" y="33.8" font-size="6.2" textLength="11.50" lengthAdjust="spacingAndGlyphs" fill="#2c2c2c" stroke="#2c2c2c" stroke-width="0.08">46%</text>
<circle cx="227.1" cy="21.5" r="5" fill="#dadada" stroke="#a8c4a8" stroke-width="0.6"/><path d="M230.6 18 a5 5 0 0 1 -7 7z" fill="#8ee08e"/><path d="M223.6 25 l7 -7" stroke="#8a9a8a" stroke-width="0.6"/>
<text x="221.55" y="33.8" font-size="6.2" textLength="11.00" lengthAdjust="spacingAndGlyphs" fill="#a0a0a0" stroke="#a0a0a0" stroke-width="0.08">Edit</text>
<rect x="249.2" y="16.5" width="10.5" height="10.2" fill="#cfdccf" stroke="#a8b8a8" stroke-width="0.6"/><path d="M252.6 19.4 h4.8 l1.4 6.4 h-8.7z" fill="#8ee08e"/>
<text x="239.65" y="33.8" font-size="6.2" textLength="29.00" lengthAdjust="spacingAndGlyphs" fill="#a0a0a0" stroke="#a0a0a0" stroke-width="0.08">Transform</text>
<path d="M281.6 16.9 A4.8 4.8 0 0 0 279.9 24.6" fill="none" stroke="#2f9a2f" stroke-width="1.9"/><path d="M281.6 16.9 A4.8 4.8 0 0 0 279.9 24.6" fill="none" stroke="#50d850" stroke-width="1.0"/>
<path d="M285.2 26.2 A4.8 4.8 0 0 0 287.1 18.4" fill="none" stroke="#2f9a2f" stroke-width="1.9"/><path d="M285.2 26.2 A4.8 4.8 0 0 0 287.1 18.4" fill="none" stroke="#50d850" stroke-width="1.0"/>
<path d="M278.4 22.9 l4.8 3.2 l-4 1.0z" fill="#3cd03c" stroke="#2f9a2f" stroke-width="0.5"/><path d="M288.7 20.2 l-4.4 -3.3 l4.2 -0.6z" fill="#3cd03c" stroke="#2f9a2f" stroke-width="0.5"/>
<text x="274.05" y="33.8" font-size="6.2" textLength="17.90" lengthAdjust="spacingAndGlyphs" fill="#2c2c2c" stroke="#2c2c2c" stroke-width="0.08">Rotate</text>
<g transform="rotate(-45 307.5 21.4)"><rect x="301.6" y="18.2" width="11.8" height="6.4" rx="3.2" fill="#a8e0a8" stroke="#a8c0b0" stroke-width="0.5"/><path d="M304.8 18.2 h5.4 a3.2 3.2 0 0 1 3.2 3.2 h-11.8 a3.2 3.2 0 0 1 3.2 -3.2z" fill="#a8d8e0"/></g>
<text x="297.35" y="33.8" font-size="6.2" textLength="19.40" lengthAdjust="spacingAndGlyphs" fill="#a0a0a0" stroke="#a0a0a0" stroke-width="0.08">Flatten</text>
<circle cx="343.6" cy="21.5" r="5" fill="#d6e6d6" stroke="#a8dca8" stroke-width="0.9"/><rect x="339.6" y="18.6" width="6" height="6.2" fill="#a8cce8"/>
<text x="335.55" y="33.8" font-size="6.2" textLength="14.50" lengthAdjust="spacingAndGlyphs" fill="#a0a0a0" stroke="#a0a0a0" stroke-width="0.08">Mask</text>
<circle cx="363.2" cy="21" r="4.9" fill="#c2e4bc"/><circle cx="361.3" cy="22.7" r="3.1" fill="#8ed88a" stroke="#3a9a3a" stroke-width="0.5"/><circle cx="360.3" cy="24.3" r="2" fill="#3ce03c" stroke="#2a9a2a" stroke-width="0.4"/>
<text x="355.35" y="33.8" font-size="6.2" textLength="13.90" lengthAdjust="spacingAndGlyphs" fill="#2c2c2c" stroke="#2c2c2c" stroke-width="0.08">Scale</text>
<path d="M392.2 20.7 h3.3 v-4.2 h6.6 v6.6 h-3.3 v3.8 h-6.6z" fill="#8fd8d8" stroke="#78c0c0" stroke-width="0.4"/>
<text x="388.55" y="33.8" font-size="6.2" textLength="16.50" lengthAdjust="spacingAndGlyphs" fill="#a0a0a0" stroke="#a0a0a0" stroke-width="0.08">Union</text>
<rect x="417.2" y="20.7" width="6.8" height="6.2" fill="#8fd8d8" stroke="#78c0c0" stroke-width="0.4"/><rect x="420.7" y="16.5" width="6.6" height="6.6" fill="#e8e8e8" stroke="#c0c0c0" stroke-width="0.4"/>
<text x="410.35" y="33.8" font-size="6.2" textLength="23.40" lengthAdjust="spacingAndGlyphs" fill="#a0a0a0" stroke="#a0a0a0" stroke-width="0.08">Subtract</text>
<rect x="446.8" y="20.2" width="6.4" height="6.3" fill="#e6e6e6" stroke="#c4c4c4" stroke-width="0.4"/><rect x="450" y="16.3" width="6.4" height="6.4" fill="#e6e6e6" stroke="#c4c4c4" stroke-width="0.4"/><rect x="450" y="20.2" width="3.2" height="2.5" fill="#6fc8c8"/>
<text x="439.25" y="33.8" font-size="6.2" textLength="24.40" lengthAdjust="spacingAndGlyphs" fill="#a0a0a0" stroke="#a0a0a0" stroke-width="0.08">Intersect</text>
<path d="M478.3 20.2 h3.6 v-3.9 h6.8 v6.6 h-3.4 v3.6 h-7z" fill="#8fd8d8" stroke="#78c0c0" stroke-width="0.4"/><rect x="481.9" y="20.2" width="3.4" height="2.7" fill="#f4fafa"/>
<text x="468.95" y="33.8" font-size="6.2" textLength="28.30" lengthAdjust="spacingAndGlyphs" fill="#a0a0a0" stroke="#a0a0a0" stroke-width="0.08">Difference</text>
<path d="M527.8 16.4 l3.1 2.9 h-2 v5 h-2.2 v-5 h-2z" fill="#9cc4ec"/><rect x="523.3" y="20.7" width="9.3" height="2" fill="#e4e4e4" stroke="#b8c8d8" stroke-width="0.4"/><rect x="527.2" y="20.6" width="1.4" height="2.2" fill="#9cc4ec"/><rect x="523" y="24.3" width="9.9" height="2.2" fill="#9cc4ec"/>
<text x="516.25" y="33.8" font-size="6.2" textLength="22.80" lengthAdjust="spacingAndGlyphs" fill="#a0a0a0" stroke="#a0a0a0" stroke-width="0.08">Forward</text>
<rect x="552.9" y="17" width="10.9" height="2.9" fill="#5aa8f0" stroke="#3a88d0" stroke-width="0.3"/><rect x="553.3" y="20.8" width="10.1" height="2" fill="#f4f4f4" stroke="#9a9a9a" stroke-width="0.4"/><path d="M555.6 22.9 h5.4 l-2.7 4z" fill="#4a98e8"/>
<text x="544.65" y="33.8" font-size="6.2" textLength="26.40" lengthAdjust="spacingAndGlyphs" fill="#2c2c2c" stroke="#2c2c2c" stroke-width="0.08">Backward</text>
<path d="M593.9 20.0 h2.7 v-2.4 a0.7 0.7 0 0 1 0.7 -0.7 h5.5 a0.7 0.7 0 0 1 0.7 0.7 v8.1 a0.7 0.7 0 0 1 -0.7 0.7 h-8.2 a0.7 0.7 0 0 1 -0.7 -0.7z" fill="#56aef2" stroke="#2b3442" stroke-width="1"/><path d="M597.1 20.2 v6" stroke="#2b3442" stroke-width="0.7"/>
<text x="590.3" y="33.8" font-size="6.2" textLength="20" lengthAdjust="spacingAndGlyphs" fill="#3c3c3c" stroke="#3c3c3c" stroke-width="0.08">Mirror</text>
</svg></body></html>
